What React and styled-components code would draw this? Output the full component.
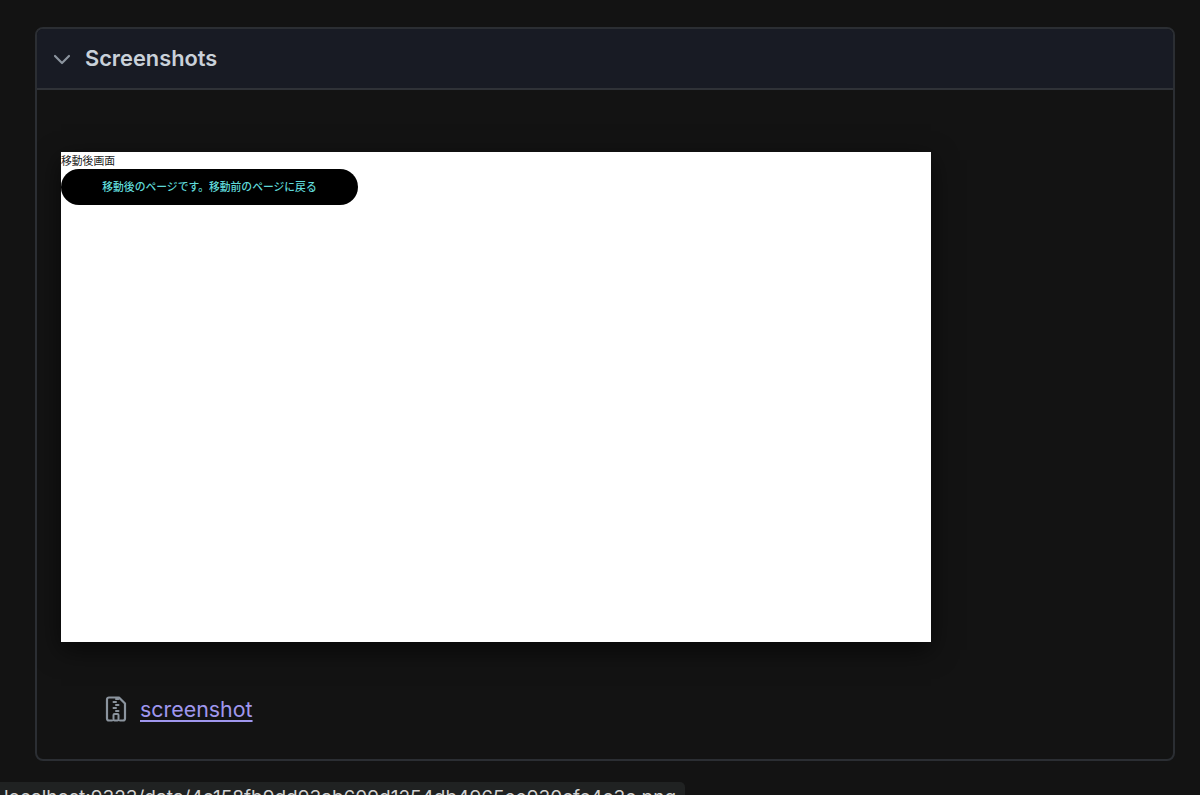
import React from "react";
import styled, { createGlobalStyle } from "styled-components";

const GlobalStyle = createGlobalStyle`
  html, body {
    margin: 0;
    height: 100%;
    background: #131313;
    overflow: hidden;
  }
  body {
    font-family: Inter, "Noto Sans CJK JP", sans-serif;
  }
`;

const Page = styled.div`
  padding: 27px 25px 0 35px;
`;

const Panel = styled.section`
  height: 734px;
  box-sizing: border-box;
  border: 2px solid #2b2e33;
  border-radius: 8px;
  overflow: hidden;
`;

const PanelHeader = styled.div`
  display: flex;
  align-items: center;
  gap: 13px;
  height: 59px;
  padding-left: 15px;
  background: #181b24;
  border-bottom: 2px solid #2f3237;
`;

const HeaderTitle = styled.span`
  padding-bottom: 2px;
  color: #c9d1d9;
  font-size: 21.8px;
  font-weight: 600;
`;

const PanelBody = styled.div`
  padding: 62px 24px 0;
`;

const Shot = styled.div`
  width: 870px;
  height: 490px;
  box-sizing: border-box;
  padding-top: 2px;
  background: #fff;
  box-shadow: 0 8px 24px rgba(0, 0, 0, 0.6);
  color: #222;
  font-size: 10.8px;
  line-height: 15px;
`;

const PillButton = styled.div`
  display: flex;
  align-items: center;
  justify-content: center;
  width: 297px;
  height: 36px;
  border-radius: 18px;
  background: #000;
  color: #5fd8d8;
  font-size: 10.8px;
  font-weight: 500;
`;

const AttachmentRow = styled.div`
  display: flex;
  align-items: center;
  gap: 12px;
  margin-top: 54px;
  padding-left: 43px;
`;

const AttachmentLink = styled.a`
  color: #a097ee;
  font-size: 21.4px;
  text-decoration: underline;
  text-underline-offset: 3px;
`;

const StatusTip = styled.div`
  position: fixed;
  left: 0;
  bottom: -10px;
  width: 685px;
  height: 23px;
  box-sizing: border-box;
  padding: 4px 0 0 4px;
  background: #202222;
  border-radius: 0 5px 0 0;
  color: #d4d4d4;
  font-size: 19px;
  line-height: 24px;
  white-space: nowrap;
  overflow: hidden;
`;

const Chevron = () => (
  <svg width="20" height="20" viewBox="0 0 20 20" fill="none" stroke="#8b949e" strokeWidth="2.2" strokeLinecap="round" strokeLinejoin="round">
    <path d="M3 7l7 7 7-7" />
  </svg>
);

const ZipIcon = () => (
  <svg width="24" height="26" viewBox="0 0 24 26" fill="none" stroke="#8b949e" strokeWidth="2.200" strokeLinecap="round" strokeLinejoin="round">
    <path d="M8 24.500H5A2 2 0 0 1 3 22.500V3.500A2 2 0 0 1 5 1.500h10l6 6v15a2 2 0 0 1-2 2h-3" />
    <path d="M12 3h2.500M9.500 6H12M12 9h2.500M9.500 12H12M12 15h2.500" strokeWidth="2" />
    <rect x="9.500" y="18" width="5" height="6.500" rx="1" strokeWidth="2" />
  </svg>
);

export default function App() {
  return (
    <>
      <GlobalStyle />
      <Page>
        <Panel>
          <PanelHeader>
            <Chevron />
            <HeaderTitle>Screenshots</HeaderTitle>
          </PanelHeader>
          <PanelBody>
            <Shot>
              移動後画面
              <PillButton>移動後のページです。移動前のページに戻る</PillButton>
            </Shot>
            <AttachmentRow>
              <ZipIcon />
              <AttachmentLink href="#">screenshot</AttachmentLink>
            </AttachmentRow>
          </PanelBody>
        </Panel>
      </Page>
      <StatusTip>localhost:9323/data/4c158fb9dd93ab609d1254db4965ee930cfc4c3c.png</StatusTip>
    </>
  );
}
